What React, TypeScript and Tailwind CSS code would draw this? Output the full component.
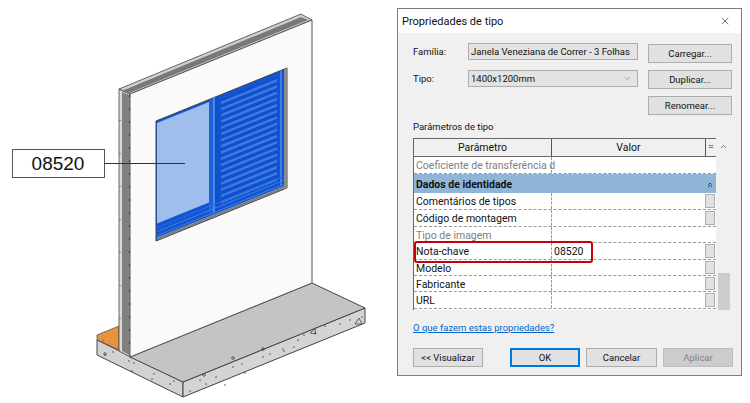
import { ChevronDown, ChevronUp, ChevronsUp, X } from "lucide-react";

// window face is a parallelogram, every part is measured from its top and bottom edge
const SLOPE = 0.405;
const yTop = (x: number) => 121 - SLOPE * (x - 156);
const yBot = (x: number) => 241 - SLOPE * (x - 156);
const quad = (x1: number, x2: number, t: number, b: number) =>
  `${x1},${yTop(x1) + t} ${x2},${yTop(x2) + t} ${x2},${yBot(x2) - b} ${x1},${yBot(x1) - b}`;

const LOUVERS = Array.from({ length: 17 }, (_, i) => 7 + i * 6.2);

const SPECKS = [
  [105, 355], [113, 352], [129, 361], [134, 363], [132, 371], [154, 374], [152, 379], [170, 384], [174, 381], [190, 391],
  [200, 380], [206, 384], [216, 377], [233, 367], [242, 364], [263, 357], [270, 354], [284, 351], [294, 347], [298, 340],
  [304, 335], [315, 333], [325, 326], [340, 324], [350, 320], [362, 317], [225, 385], [245, 373], [283, 349],
];

const Drawing = () => (
  <svg width={397} height={403} viewBox="0 0 397 403" className="shrink-0">
    {/* orange block behind the wall */}
    <polygon points="97,335 119,326 119,350 97,340" fill="#e8913f" stroke="#555" strokeWidth={0.8} />
    <polyline points="103,339 103,344 119,350" fill="none" stroke="#a8622a" strokeWidth={0.8} />
    {/* slab */}
    <polygon points="97,340 183,382 183,397 97,355" fill="#d2d2d2" stroke="#444" strokeWidth={1} />
    <polygon points="183,382 365,308 365,323 183,397" fill="#d4d4d4" stroke="#444" strokeWidth={1} />
    <polygon points="130,357 312,283 365,308 183,382" fill="#c4c4c4" stroke="#444" strokeWidth={1} />
    {SPECKS.map(([x, y]) => (
      <circle key={`${x}-${y}`} cx={x} cy={y} r={0.7} fill="#333" />
    ))}
    <polygon points="355,324 359,318 362,324" fill="none" stroke="#333" strokeWidth={0.7} />
    <polygon points="310,333 315,329 316,334" fill="none" stroke="#333" strokeWidth={0.7} />
    <circle cx={233} cy={358} r={1.3} fill="none" stroke="#333" strokeWidth={0.7} />
    <circle cx={263} cy={349} r={1.3} fill="none" stroke="#333" strokeWidth={0.7} />
    <circle cx={204} cy={375} r={1.3} fill="none" stroke="#333" strokeWidth={0.7} />
    <circle cx={105} cy={354} r={1.3} fill="none" stroke="#333" strokeWidth={0.7} />

    {/* wall edge */}
    <polygon points="119,89 130,94 130,357 119,351" fill="#d8d8d8" stroke="#444" strokeWidth={0.8} />
    <polygon points="122,92 129,95 129,355 122,351" fill="#808080" />
    <polygon points="119,89 301,14 312,20 130,94" fill="#cfcfcf" stroke="#444" strokeWidth={0.8} />
    <polygon points="123,90.5 301,17 308,20 129,93" fill="#787878" />
    <line x1={129.5} y1={95} x2={129.5} y2={356} stroke="#222" strokeWidth={1} strokeDasharray="2 11" />
    <line x1={120} y1={120} x2={120} y2={350} stroke="#222" strokeWidth={0.8} strokeDasharray="1 32" />

    {/* wall face */}
    <polygon points="130,94 312,20 312,283 130,357" fill="#fafafa" stroke="#555" strokeWidth={1} />

    {/* window */}
    <polygon points={quad(156, 287, 0, 0)} fill="#1154d4" stroke="#444" strokeWidth={1} />
    <polygon points={quad(284, 287, 0, 0)} fill="#8a8a8a" />
    <polygon points={quad(157, 209, 2.5, 17)} fill="#9fbeeb" />
    <polygon points={quad(209, 213, 0, 5)} fill="#1c62dc" />
    <polygon points={quad(213, 215, 0, 5)} fill="#4f88e2" />
    <polygon points={quad(215, 219, 0, 5)} fill="#0f50cc" />
    <polygon points={quad(280, 282, 0, 5)} fill="#3f7ce0" />
    <polygon points={quad(220, 278, 5, 10)} fill="#0e50ce" />
    {LOUVERS.map((t) => (
      <polygon key={t} points={quad(221, 277, t, 120 - t - 2.6)} fill="#3f7cde" />
    ))}
    <line x1={157} y1={yBot(157) - 13} x2={284} y2={yBot(284) - 13} stroke="#2a6ce0" strokeWidth={1} />
    <line x1={157} y1={yBot(157) - 9} x2={284} y2={yBot(284) - 9} stroke="#4f88e2" strokeWidth={0.8} />
    <line x1={157} y1={yBot(157) - 5} x2={284} y2={yBot(284) - 5} stroke="#4f88e2" strokeWidth={0.8} />
    <line x1={157} y1={yBot(157) - 2.5} x2={287} y2={yBot(287) - 2.5} stroke="#8d8d88" strokeWidth={1.5} />
    <line x1={157} y1={yBot(157) - 1} x2={287} y2={yBot(287) - 1} stroke="#a88f70" strokeWidth={1} />

    {/* tag with leader */}
    <line x1={105} y1={163.5} x2={185} y2={163.5} stroke="#333" strokeWidth={1} />
    <rect x={12.5} y={149.5} width={92} height={28} fill="#fff" stroke="#555" strokeWidth={1} />
    <text x={58} y={170} textAnchor="middle" fontSize={19} fontFamily="'Liberation Sans', sans-serif" fill="#111">
      08520
    </text>
  </svg>
);

const Btn = ({ label, className }: { label: string; className: string }) => (
  <button className={`flex items-center justify-center border ${className}`}>{label}</button>
);

const grayBtn = "border-[#adadad] bg-[#e1e1e1] text-[#111]";

const Select = ({ value, width }: { value: string; width: string }) => (
  <div className={`flex h-[17px] items-center justify-between border border-[#adadad] bg-[#e3e3e3] pl-[2px] pr-[5px] ${width}`}>
    <span className="whitespace-nowrap">{value}</span>
    <ChevronDown size={9} strokeWidth={1.2} className="text-[#555]" />
  </div>
);

const Row = ({
  name,
  value,
  muted,
  stub,
  className,
}: {
  name: string;
  value?: string;
  muted?: boolean;
  stub?: boolean;
  className: string;
}) => (
  <div className={`flex border-b border-dashed border-[#999] ${className}`}>
    <div className={`flex w-[138px] items-center whitespace-nowrap border-r border-dashed border-[#999] pl-[2px] pt-[4px] ${muted ? "text-[#808080]" : "text-[#111]"}`}>
      {name}
    </div>
    <div className="flex flex-1 items-center pl-[2px] pt-[4px] text-[#111]">{value}</div>
    <div className="flex w-[11px] py-[1px] pr-[1px]">
      {stub && <div className="w-full border border-[#adadad] bg-[#e1e1e1]" />}
    </div>
  </div>
);

const Dialog = () => (
  <div
    className="mt-2 flex h-[368px] w-[345px] flex-col border border-[#7d7d7d] bg-[#f0f0f0] text-[9.5px] leading-none text-[#111]"
    style={{ fontFamily: "Roboto, sans-serif" }}
  >
    <div className="flex h-[24px] items-center justify-between bg-white pl-[4px] pr-[10px] text-[11px]">
      <span>Propriedades de tipo</span>
      <X size={12} strokeWidth={1.1} />
    </div>

    <div className="flex flex-1 flex-col pl-[15px] pr-[8px] pt-[10px]">
      <div className="flex items-start">
        <div className="flex w-[55px] flex-col">
          <div className="flex h-[17px] items-center">Família:</div>
          <div className="mt-[10px] flex h-[17px] items-center">Tipo:</div>
        </div>
        <div className="flex flex-col gap-[10px]">
          <Select value="Janela Veneziana de Correr - 3 Folhas" width="w-[170px]" />
          <Select value="1400x1200mm" width="w-[170px]" />
        </div>
        <div className="ml-[10px] flex flex-col gap-[7px] pt-[1px]">
          <Btn label="Carregar..." className={`h-[19px] w-[84px] ${grayBtn}`} />
          <Btn label="Duplicar..." className={`h-[19px] w-[84px] ${grayBtn}`} />
          <Btn label="Renomear..." className={`h-[19px] w-[84px] ${grayBtn}`} />
        </div>
      </div>

      <div className="mt-[7px]">Parâmetros de tipo</div>

      <div className="mt-[6px] flex h-[172px] w-[318px] shrink-0 overflow-hidden text-[10.5px]">
        <div className="flex w-[303px] shrink-0 flex-col border-l border-[#666]">
          <div className="flex h-[19px] shrink-0 border-y border-[#666] bg-[#f0f0f0]">
            <div className="flex w-[138px] items-center justify-center border-r border-[#555] pt-[3px]">Parâmetro</div>
            <div className="flex flex-1 items-center justify-center pt-[3px]">Valor</div>
            <div className="flex w-[11px] items-center justify-center border-l border-[#555] text-[#777]">=</div>
          </div>
          <div className="flex flex-1 flex-col overflow-hidden bg-white">
            <Row name="Coeficiente de transferência d" muted className="h-[17px] shrink-0" />
            <div className="flex h-[19px] shrink-0 items-center justify-between bg-[#8fb6d8] px-[2px] pt-[4px] font-bold">
              Dados de identidade
              <ChevronsUp size={8} strokeWidth={2} />
            </div>
            <Row name="Comentários de tipos" stub className="h-[17px] shrink-0" />
            <Row name="Código de montagem" stub className="h-[17px] shrink-0" />
            <Row name="Tipo de imagem" muted className="h-[16px] shrink-0" />
            <div className="relative shrink-0">
              <Row name="Nota-chave" value="08520" stub className="h-[17px]" />
              <div className="absolute left-0 top-[-2px] h-[22px] w-[179px] rounded-[3px] border-2 border-[#c8000a]" />
            </div>
            <Row name="Modelo" stub className="h-[16px] shrink-0" />
            <Row name="Fabricante" stub className="h-[16px] shrink-0" />
            <Row name="URL" stub className="h-[17px] shrink-0" />
          </div>
        </div>
        <div className="flex h-[172px] w-[15px] shrink-0 flex-col items-center justify-between bg-[#f0f0f0]">
          <ChevronUp size={9} strokeWidth={1.8} className="mt-[4px] text-[#444]" />
          <div className="h-[37px] w-[12px] shrink-0 bg-[#cdcdcd]" />
        </div>
      </div>

      <a className="mt-[13px] text-[#0066cc] underline">O que fazem estas propriedades?</a>

      <div className="mt-[16px] flex">
        <Btn label="<< Visualizar" className={`h-[19px] w-[70px] ${grayBtn}`} />
        <Btn label="OK" className="ml-[27px] h-[19px] w-[70px] border-2 border-[#0078d7] bg-[#e1e1e1]" />
        <Btn label="Cancelar" className={`ml-[6px] h-[19px] w-[71px] ${grayBtn}`} />
        <Btn label="Aplicar" className="ml-[6px] h-[19px] w-[70px] border-[#bfbfbf] bg-[#cccccc] text-[#838383]" />
      </div>
    </div>
  </div>
);

export default function App() {
  return (
    <div className="flex h-[403px] w-[750px] overflow-hidden bg-white">
      <Drawing />
      <Dialog />
    </div>
  );
}
